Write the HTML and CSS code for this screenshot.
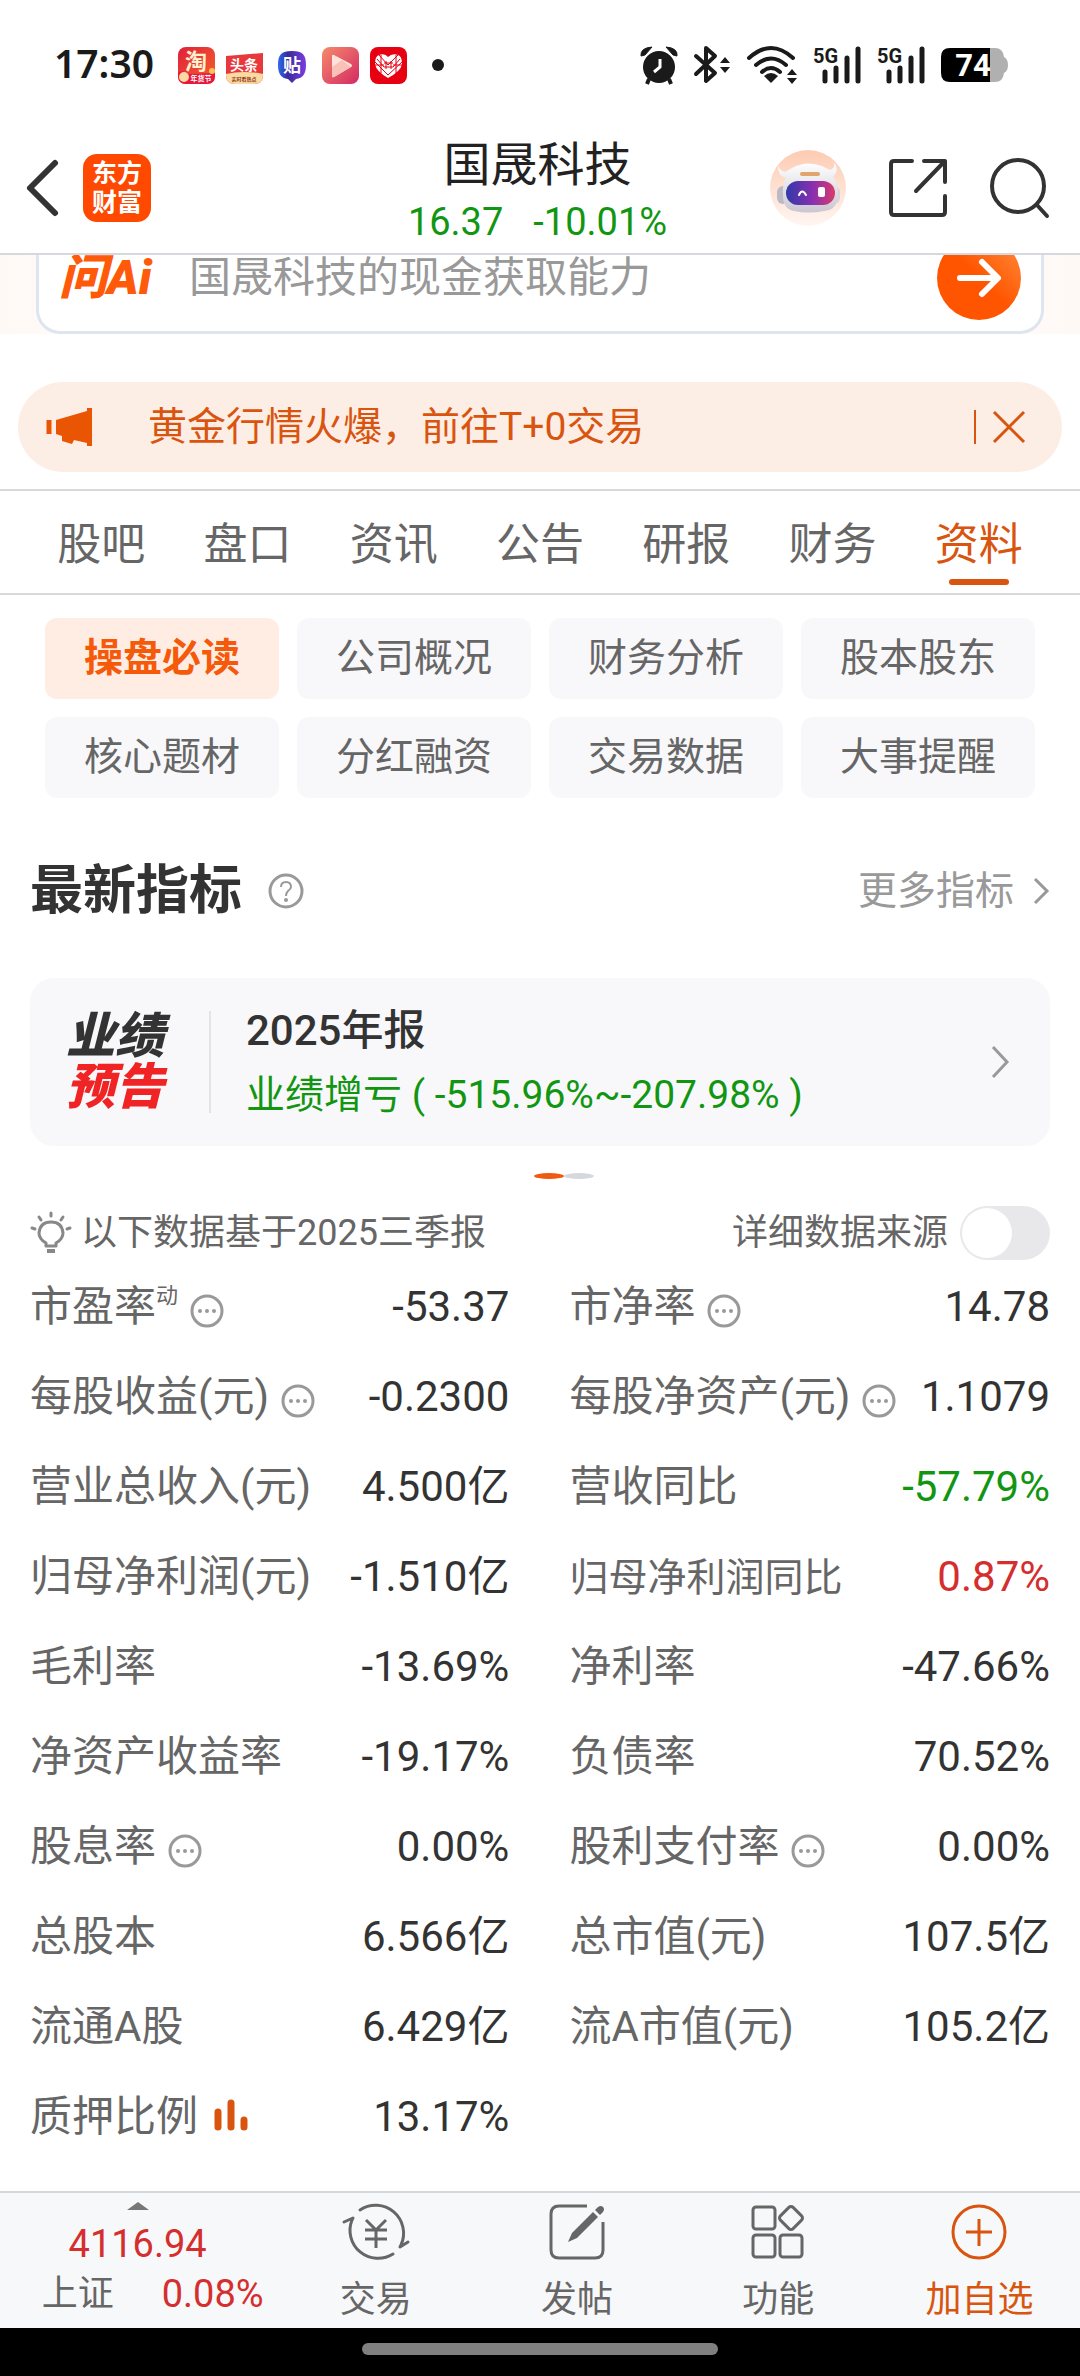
FILE: index.html
```html
<!DOCTYPE html>
<html lang="zh-CN">
<head>
<meta charset="UTF-8">
<meta name="viewport" content="width=device-width, initial-scale=1.0">
<title>国晟科技 - 资料</title>
<link rel="stylesheet" href="styles.css">
</head>
<body>

<!-- STATUS BAR -->
<div class="status">
  <span class="clock">17:30</span>
  <div class="apps">
    <svg width="37" height="37" viewBox="0 0 37 37">
      <defs><linearGradient id="tao" x1="0" y1="0" x2="1" y2="1"><stop offset="0" stop-color="#e01f3a"/><stop offset="1" stop-color="#f5642c"/></linearGradient></defs>
      <rect width="37" height="37" rx="8" fill="url(#tao)"/>
      <path d="M0 26C4 22 8 26 11 27L37 26V29Q37 37 29 37H8Q0 37 0 29Z" fill="#e8173c"/>
      <circle cx="6" cy="30" r="5" fill="#fbd9a0"/><circle cx="34" cy="24" r="3" fill="#f9c05a"/>
      <text x="18" y="22" class="i-text" font-size="22" fill="#fff0cf">淘</text>
      <text x="23" y="34" class="i-text" font-size="7" fill="#fff">年货节</text>
    </svg>
    <svg width="37" height="37" viewBox="0 0 37 37">
      <path d="M0 9L37 6V28Q37 37 28 37H9Q0 37 0 28Z" fill="#e9383c"/>
      <path d="M0 27Q18 23 37 27V28Q37 37 28 37H9Q0 37 0 28Z" fill="#fbd9a0"/>
      <text x="18" y="23" class="i-text" font-size="14" fill="#fff">头条</text>
      <text x="18" y="34" class="i-text" font-size="5" fill="#8a3a1c">实时看热点</text>
    </svg>
    <svg width="37" height="37" viewBox="0 0 37 37">
      <defs><linearGradient id="tie" x1="0" y1="0" x2="1" y2="0"><stop offset="0" stop-color="#2a6cf0"/><stop offset=".35" stop-color="#3a2a9c"/><stop offset="1" stop-color="#7a3fe0"/></linearGradient></defs>
      <path d="M18 4C29 4 32 8 32 18C32 27 29 31 22 32L18 36L14 32C7 31 4 27 4 18C4 8 7 4 18 4Z" fill="url(#tie)"/>
      <text x="18" y="25" class="i-text" font-size="18" fill="#fff">贴</text>
    </svg>
    <svg width="37" height="37" viewBox="0 0 37 37">
      <defs><linearGradient id="play" x1="0" y1="0" x2="1" y2="1"><stop offset="0" stop-color="#f58a6c"/><stop offset="1" stop-color="#d42a63"/></linearGradient></defs>
      <rect width="37" height="37" rx="8" fill="url(#play)"/>
      <path d="M10 9Q10 7 12 8L29 17Q31 19 29 20L12 30Q10 31 10 29Z" fill="#fde3dc"/>
      <path d="M10 20L20 13L29 20L12 30Q10 31 10 29Z" fill="#f9c1b8"/>
    </svg>
    <svg width="37" height="37" viewBox="0 0 37 37">
      <rect width="37" height="37" rx="8" fill="#e60012"/>
      <path d="M18 10Q22 6 28 8Q32 9 32 17Q31 24 18 31Q6 24 5 17Q5 9 9 8Q15 6 18 10Z" fill="#fff"/>
      <path d="M9 8L18 18L28 8M5 15L18 28L32 15M11 8V26M26 8V26M5 18H14M23 18H32M16 14V22M21 14V22M14 16H23M14 20H23M7 12L14 20M30 12L23 20" stroke="#e60012" stroke-width="1" fill="none"/>
    </svg>
    <svg width="37" height="37" viewBox="0 0 37 37"><circle cx="20" cy="18" r="6" fill="#1a1a1a"/></svg>
  </div>
  <div class="signals">
    <svg width="38" height="40" viewBox="0 0 38 40">
      <circle cx="19" cy="22" r="16" fill="#1a1a1a"/>
      <path d="M1 11Q0 3 12 2L5 10ZM37 11Q38 3 26 2L33 10Z" fill="#1a1a1a" stroke="#1a1a1a" stroke-linejoin="round"/>
      <path d="M9 34L7 39M29 34L31 39" stroke="#1a1a1a" stroke-width="4"/>
      <path d="M20 14V22L14 27" stroke="#fff" stroke-width="3" fill="none"/>
    </svg>
    <svg width="38" height="40" viewBox="0 0 38 40">
      <path d="M3 11L22 28L13 36V3L22 11L3 29" stroke="#1a1a1a" stroke-width="4" fill="none" stroke-linejoin="round" stroke-linecap="round"/>
      <path d="M27 18L32 12L37 18ZM27 22H37L32 28Z" fill="#1a1a1a"/>
    </svg>
    <svg width="52" height="40" viewBox="0 0 52 40">
      <path d="M3 13Q25 -7 47 13M10 20Q25 7 40 20M16 27Q25 19 34 27" stroke="#1a1a1a" stroke-width="4" fill="none" stroke-linecap="round"/>
      <path d="M18 31Q25 25 32 31L25 38Z" fill="#1a1a1a"/>
      <path d="M41 30L46 24L51 30ZM41 33H51L46 39Z" fill="#1a1a1a"/>
    </svg>
    <svg width="49" height="40" viewBox="0 0 49 40">
      <text x="0" y="18" font-size="20" font-weight="700" fill="#1a1a1a">5G</text>
      <path d="M12 27V36M23 23V36M34 13V36M45 4V36" stroke="#1a1a1a" stroke-width="5" stroke-linecap="round"/>
    </svg>
    <svg width="49" height="40" viewBox="0 0 49 40">
      <text x="0" y="18" font-size="20" font-weight="700" fill="#1a1a1a">5G</text>
      <path d="M12 27V36M23 23V36M34 13V36M45 4V36" stroke="#1a1a1a" stroke-width="5" stroke-linecap="round"/>
    </svg>
    <svg width="67" height="40" viewBox="0 0 67 40">
      <path d="M49 3H54Q62 3 63 12Q67 14 67 20Q67 26 63 28Q62 37 54 37H49Z" fill="#b0b0b0"/>
      <path d="M9 3H49V37H9Q0 37 0 28V12Q0 3 9 3Z" fill="#000"/>
      <text x="32" y="31" font-size="31" font-weight="700" fill="#fff" text-anchor="middle">74</text>
    </svg>
  </div>
</div>

<!-- HEADER -->
<header class="header">
  <div class="side">
    <button class="icon-btn" aria-label="返回">
      <svg width="34" height="58" viewBox="0 0 34 58"><path d="M30 4L5 29L30 54" stroke="#333" stroke-width="6" fill="none" stroke-linecap="round" stroke-linejoin="round"/></svg>
    </button>
    <a class="logo" href="#"><span>东方</span><span>财富</span></a>
  </div>
  <div class="stock">
    <h1>国晟科技</h1>
    <p class="green"><span>16.37</span><span>-10.01%</span></p>
  </div>
  <div class="side right">
    <button class="icon-btn" aria-label="智能助手">
      <svg width="76" height="76" viewBox="0 0 76 76">
        <defs>
          <linearGradient id="bot" x1="0" y1="0" x2="0" y2="1"><stop offset="0" stop-color="#fdcbb2"/><stop offset="1" stop-color="#fff6f2"/></linearGradient>
          <linearGradient id="visor" x1="0" y1="0" x2="1" y2="0"><stop offset="0" stop-color="#2f3aa8"/><stop offset=".55" stop-color="#8a2fb0"/><stop offset="1" stop-color="#d93a6a"/></linearGradient>
          <linearGradient id="head" x1="0" y1="0" x2="0" y2="1"><stop offset="0" stop-color="#fff"/><stop offset="1" stop-color="#c9c6d0"/></linearGradient>
        </defs>
        <circle cx="38" cy="38" r="38" fill="url(#bot)"/>
        <rect x="7" y="36" width="12" height="18" rx="6" fill="#bdb9c4"/><rect x="58" y="36" width="12" height="18" rx="6" fill="#d8d4dc"/>
        <path d="M8 14Q8 20 15 22L22 18Q36 10 52 16L60 20Q66 17 64 12Q70 20 63 27Q69 34 68 46Q67 60 54 61Q38 64 24 61Q13 59 13 46Q12 36 16 28Q7 26 8 14Z" fill="url(#head)"/>
        <rect x="30" y="22" width="20" height="4" rx="2" fill="#e3a36c"/>
        <rect x="16" y="31" width="49" height="24" rx="12" fill="url(#visor)"/>
        <path d="M29 45Q32 38 36 45" stroke="#fff" stroke-width="2" fill="none" stroke-linecap="round"/>
        <rect x="48" y="37" width="7" height="10" rx="2" fill="#fff"/>
      </svg>
    </button>
    <button class="icon-btn" aria-label="分享">
      <svg width="60" height="60" viewBox="0 0 60 60"><path d="M24 3H6Q3 3 3 6V54Q3 57 6 57H54Q57 57 57 54V38M36 3H57V24M56 4L28 33" stroke="#333" stroke-width="4" fill="none" stroke-linecap="round" stroke-linejoin="round"/></svg>
    </button>
    <button class="icon-btn" aria-label="搜索">
      <svg width="60" height="60" viewBox="0 0 60 60"><circle cx="28" cy="28" r="26" stroke="#333" stroke-width="4" fill="none"/><path d="M47 47L57 58" stroke="#333" stroke-width="4" stroke-linecap="round"/></svg>
    </button>
  </div>
</header>

<main class="main">

  <!-- AI SEARCH -->
  <div class="ask-strip">
    <form class="ask">
      <label class="ask-logo" for="q">问Ai</label>
      <input id="q" type="text" placeholder="国晟科技的现金获取能力">
      <button class="go" type="button" aria-label="提问">
        <svg width="84" height="84" viewBox="0 0 84 84"><path d="M23 42H60M45 26L61 42L45 58" stroke="#fff" stroke-width="6" fill="none" stroke-linecap="round" stroke-linejoin="round"/></svg>
      </button>
    </form>
  </div>

  <!-- NOTICE -->
  <div class="notice">
    <svg width="48" height="42" viewBox="0 0 48 42"><path d="M10 14L41 5V2H46V40H41V37L28 34L26 38L16 35V30L10 28Z" fill="#ea5504"/><path d="M3 14V28" stroke="#ea5504" stroke-width="5"/></svg>
    <a href="#">黄金行情火爆，前往T+0交易</a>
    <button class="close" aria-label="关闭">
      <svg width="34" height="34" viewBox="0 0 34 34"><path d="M2 2L32 32M32 2L2 32" stroke="#d9550f" stroke-width="3"/></svg>
    </button>
  </div>

  <nav class="tabs">
    <a href="#">股吧</a><a href="#">盘口</a><a href="#">资讯</a><a href="#">公告</a><a href="#">研报</a><a href="#">财务</a><a href="#" class="active">资料</a>
  </nav>

  <div class="chips">
    <button class="active">操盘必读</button>
    <button>公司概况</button>
    <button>财务分析</button>
    <button>股本股东</button>
    <button>核心题材</button>
    <button>分红融资</button>
    <button>交易数据</button>
    <button>大事提醒</button>
  </div>

  <!-- LATEST INDICATORS -->
  <div class="section-head">
    <h2>最新指标</h2>
    <button class="icon-btn" aria-label="说明">
      <svg width="36" height="36" viewBox="0 0 36 36"><circle cx="18" cy="18" r="16" stroke="#999" stroke-width="3" fill="none"/><path d="M13 14Q13 9 18 9Q23 9 23 14Q23 16 20 18Q18 20 18 23" stroke="#999" stroke-width="2" fill="none"/><circle cx="18" cy="27" r="2" fill="#999"/></svg>
    </button>
    <a class="more" href="#">更多指标
      <svg width="18" height="28" viewBox="0 0 18 28"><path d="M3 2L15 14L3 26" stroke="#999" stroke-width="3" fill="none"/></svg>
    </a>
  </div>

  <a class="report" href="#">
    <span class="badge"><span>业绩</span><span class="red">预告</span></span>
    <span class="report-text">
      <strong>2025年报</strong>
      <span class="green">业绩增亏 ( -515.96%~-207.98% )</span>
    </span>
    <svg width="20" height="34" viewBox="0 0 20 34"><path d="M3 2L17 17L3 32" stroke="#999" stroke-width="3" fill="none"/></svg>
  </a>

  <div class="pager"><span class="on"></span><span></span></div>

  <div class="source">
    <svg width="42" height="42" viewBox="0 0 42 42"><path d="M16 34V31Q9 27 9 21Q10 10 21 10Q32 10 33 21Q33 27 26 31V34Z" stroke="#888" stroke-width="3" fill="none" stroke-linejoin="round"/><path d="M17 39H25" stroke="#888" stroke-width="4"/><path d="M21 1V4M9 5L11 8M33 5L31 8M2 16L5 17M40 16L37 17" stroke="#888" stroke-width="3" stroke-linecap="round"/></svg>
    <span>以下数据基于2025三季报</span>
    <label for="detail">详细数据来源</label>
    <input id="detail" class="switch" type="checkbox">
  </div>

  <table class="data">
    <tbody id="rows"></tbody>
  </table>
</main>

<!-- BOTTOM BAR -->
<footer class="bottom">
  <a class="index" href="#">
    <svg width="22" height="8" viewBox="0 0 22 8"><path d="M0 8L11 0L22 8Z" fill="#777"/></svg>
    <span class="red">4116.94</span>
    <span class="index-row"><span>上证</span><span class="red">0.08%</span></span>
  </a>
  <button>
    <svg width="66" height="60" viewBox="0 0 66 60"><path d="M17 8A28 28 0 0 1 58 43L57 45L65 40M50 52A28 28 0 0 1 9 18L10 16L1 20" stroke="#666" stroke-width="3" fill="none" stroke-linecap="round" stroke-linejoin="round"/><path d="M23 18L33 28L43 18M22 28H44M22 37H44M33 28V46" stroke="#666" stroke-width="3" fill="none"/></svg>
    交易
  </button>
  <button>
    <svg width="60" height="60" viewBox="0 0 60 60"><path d="M40 4H12Q4 4 4 12V48Q4 56 12 56H48Q56 56 56 48V20" stroke="#666" stroke-width="3" fill="none"/><path d="M21 40L25 31L46 10L51 15L30 36Z" fill="#666"/><path d="M48 8L51 5Q54 3 56 5Q58 7 56 10L53 13Z" fill="#666"/></svg>
    发帖
  </button>
  <button>
    <svg width="60" height="60" viewBox="0 0 60 60"><g stroke="#666" stroke-width="3" fill="none"><rect x="5" y="5" width="22" height="22" rx="3"/><rect x="5" y="33" width="22" height="22" rx="3"/><rect x="32" y="33" width="22" height="22" rx="3"/><rect x="34" y="7" width="18" height="18" rx="3" transform="rotate(45 43 16)"/></g></svg>
    功能
  </button>
  <button class="add">
    <svg width="60" height="60" viewBox="0 0 60 60"><circle cx="30" cy="30" r="26" stroke="#d9550f" stroke-width="3" fill="none"/><path d="M30 17V44M17 30H43" stroke="#d9550f" stroke-width="3"/></svg>
    加自选
  </button>
</footer>
<div class="home"><span></span></div>

<script>
const tip = '<button class="tip" aria-label="说明"><svg width="34" height="34" viewBox="0 0 34 34"><circle cx="17" cy="17" r="15" stroke="#999" stroke-width="3" fill="none"/><circle cx="10" cy="17" r="2" fill="#999"/><circle cx="17" cy="17" r="2" fill="#999"/><circle cx="24" cy="17" r="2" fill="#999"/></svg></button>';
const bars = '<svg class="bars" width="34" height="32" viewBox="0 0 34 32"><path d="M4 13V28M17 4V28M30 21V28" stroke="#d9550f" stroke-width="7" stroke-linecap="round"/></svg>';

const rows = [
 ["市盈率<sup>动</sup>"+tip, "-53.37", "市净率"+tip, "14.78"],
 ["每股收益(元)"+tip, "-0.2300", "每股净资产(元)"+tip, "1.1079"],
 ["营业总收入(元)", "4.500亿", "营收同比", "-57.79%", "green"],
 ["归母净利润(元)", "-1.510亿", "<small>归母净利润同比</small>", "0.87%", "red"],
 ["毛利率", "-13.69%", "净利率", "-47.66%"],
 ["净资产收益率", "-19.17%", "负债率", "70.52%"],
 ["股息率"+tip, "0.00%", "股利支付率"+tip, "0.00%"],
 ["总股本", "6.566亿", "总市值(元)", "107.5亿"],
 ["流通A股", "6.429亿", "流A市值(元)", "105.2亿"],
 ["质押比例"+bars, "13.17%", "", ""]
];

let html = "";
rows.forEach(r => {
 html += "<tr><th>"+r[0]+"</th><td>"+r[1]+"</td>";
 html += r[2] ? "<th>"+r[2]+"</th><td class='"+(r[4]||"")+"'>"+r[3]+"</td></tr>" : "<td></td><td></td></tr>";
});
document.getElementById("rows").innerHTML = html;
</script>

</body>
</html>
```
FILE: styles.css
```css
*{
 box-sizing:border-box;
}

body{
 margin:0;
 min-height:100vh;
 display:flex;
 flex-direction:column;
 background:#fff;
 color:#333;
 font-family:Roboto,"Noto Sans CJK SC",sans-serif;
 font-size:39px;
 line-height:1.3;
}

a{
 color:inherit;
 text-decoration:none;
}

button{
 padding:0;
 border:none;
 background:none;
 color:inherit;
 font:inherit;
 cursor:pointer;
}

svg{
 display:block;
 flex:none;
 overflow:visible;
}

h1,h2,p{
 margin:0;
}

.green{color:#129612;}
.red{color:#d52e2e;}

/* STATUS BAR */
.status{
 display:flex;
 align-items:center;
 height:130px;
 padding:0 72px 0 54px;
}

.clock{
 color:#1a1a1a;
 font-family:"Noto Sans",sans-serif;
 font-size:39px;
 font-weight:600;
 line-height:40px;
 padding-bottom:4px;
}

.apps{
 display:flex;
 gap:11px;
 margin-left:24px;
}

.i-text{
 font-family:"Noto Sans CJK SC",sans-serif;
 font-weight:700;
 text-anchor:middle;
}

.signals{
 display:flex;
 gap:15px;
 margin-left:auto;
}

/* HEADER */
.header{
 display:flex;
 align-items:center;
 height:125px;
 padding:0 30px 8px 25px;
 border-bottom:2px solid #d5d8dc;
}

.side{
 flex:1;
 display:flex;
 align-items:center;
 gap:24px;
}

.right{
 justify-content:flex-end;
 gap:42px;
}

.logo{
 display:flex;
 flex-direction:column;
 align-items:center;
 justify-content:center;
 width:68px;
 height:68px;
 border-radius:14px;
 background:#ff4800;
 color:#fff;
 font-size:25px;
 font-weight:700;
 line-height:29px;
}

.stock{
 padding-top:6px;
 text-align:center;
}

.stock h1{
 color:#222;
 font-size:47px;
 font-weight:400;
 line-height:62px;
}

.stock p{
 display:flex;
 justify-content:center;
 gap:30px;
 font-size:38px;
 line-height:52px;
}

/* AI SEARCH */
.ask-strip{
 display:flex;
 align-items:flex-end;
 height:79px;
 padding:0 36px;
 overflow:hidden;
 background:linear-gradient(90deg,#fff9f6,#fff 50%,#fff9f6);
}

.ask{
 flex:1;
 display:flex;
 align-items:center;
 height:112px;
 padding:0 20px;
 border:3px solid #dde5ef;
 border-radius:24px;
 background:#fff;
}

.ask-logo{
 width:130px;
 color:#ff5a0a;
 font-size:48px;
 font-style:italic;
 font-weight:900;
}

.ask input{
 flex:1;
 min-width:0;
 padding:0;
 border:none;
 outline:none;
 background:none;
 color:#333;
 font:inherit;
 font-size:42px;
}

.ask input::placeholder{
 color:#999;
}

.go{
 border-radius:50%;
 background:linear-gradient(45deg,#ff5500 50%,#ff9040);
}

/* NOTICE */
.notice{
 display:flex;
 align-items:center;
 height:90px;
 margin:48px 18px 17px;
 padding:0 36px 0 28px;
 border-radius:45px;
 background:#fdeee5;
 color:#d9550f;
}

.notice a{
 flex:1;
 margin-left:54px;
}

.close{
 padding-left:16px;
 border-left:2px solid #d9550f;
}

/* TABS */
.tabs{
 display:flex;
 padding:0 28px;
 border-top:2px solid #d8d8d8;
 border-bottom:2px solid #d8d8d8;
}

.tabs a{
 flex:1;
 display:flex;
 flex-direction:column;
 align-items:center;
 height:102px;
 padding-top:21px;
 color:#666;
 font-size:44px;
 line-height:67px;
}

.tabs a::after{
 content:"";
 width:60px;
 height:6px;
 border-radius:3px;
}

.tabs .active{
 color:#d9550f;
}

.tabs .active::after{
 background:#d9550f;
}

.chips{
 display:grid;
 grid-template-columns:repeat(4,1fr);
 gap:18px;
 padding:23px 45px 0;
}

.chips button{
 height:81px;
 border-radius:12px;
 background:#f8f8fa;
 color:#666;
}

.chips .active{
 background:#ffede4;
 color:#f55a0a;
 font-weight:700;
}

/* LATEST INDICATORS */
.section-head{
 display:flex;
 align-items:center;
 height:180px;
 padding:6px 30px 0;
}

.section-head h2{
 margin-right:26px;
 font-size:53px;
 font-weight:700;
}

.more{
 display:flex;
 align-items:center;
 gap:18px;
 margin-left:auto;
 color:#999;
}

.report{
 display:flex;
 align-items:center;
 height:168px;
 margin:0 30px;
 padding:0 40px 0 36px;
 border-radius:24px;
 background:#f8f8fa;
}

.badge{
 display:flex;
 flex-direction:column;
 width:145px;
 border-right:2px solid #e3e3e6;
 font-size:49px;
 font-style:italic;
 font-weight:900;
 line-height:51px;
}

.badge .red{
 color:#f02424;
}

.report-text{
 flex:1;
 display:flex;
 flex-direction:column;
 margin-left:35px;
 padding-top:2px;
 line-height:64px;
}

.report-text strong{
 font-size:42px;
 font-weight:500;
}

.pager{
 display:flex;
 justify-content:center;
 margin:27px 0;
 padding-left:48px;
}

.pager span{
 width:30px;
 height:6px;
 border-radius:50%;
 background:#d5d9de;
}

.pager .on{
 background:#f05a10;
}

.source{
 display:flex;
 align-items:center;
 height:54px;
 padding:0 30px;
 color:#666;
 font-size:36px;
}

.source span{
 margin-left:9px;
}

.source label{
 margin:0 12px 0 auto;
}

.switch{
 appearance:none;
 display:flex;
 align-items:center;
 width:90px;
 height:54px;
 margin:0;
 padding:0 2px;
 border-radius:27px;
 background:#e8e8eb;
}

.switch::before{
 content:"";
 width:50px;
 height:50px;
 border-radius:50%;
 background:#fff;
}

.switch:checked{
 justify-content:flex-end;
 background:#f05a10;
}

/* DATA */
.data{
 width:calc(100% - 60px);
 margin:2px 30px 0;
 border-collapse:collapse;
 table-layout:fixed;
 font-size:42px;
}

.data tr{
 height:90px;
}

.data th,
.data td{
 padding:0;
 white-space:nowrap;
}

.data th{
 width:29%;
 color:#666;
 font-weight:400;
 text-align:left;
}

.data td{
 width:18%;
 text-align:right;
}

.data th:nth-child(3){
 width:38%;
 padding-left:60px;
}

.data td:nth-child(4){
 width:15%;
}

.data small{
 font-size:39px;
}

.data sup{
 font-size:22px;
 line-height:1;
 vertical-align:18px;
}

.tip,
.bars{
 display:inline-block;
 margin-left:12px;
}

.tip{
 vertical-align:-7px;
}

.tip svg{
 display:block;
}

.bars{
 margin-left:16px;
}

/* BOTTOM BAR */
.main{
 flex:1;
}

.bottom{
 display:flex;
 height:137px;
 border-top:2px solid #d3d8de;
 background:#f7f8fa;
 color:#666;
 font-size:36px;
}

.bottom button{
 flex:201;
 display:flex;
 flex-direction:column;
 align-items:center;
 padding-top:9px;
 line-height:76px;
}

.index{
 flex:275;
 display:flex;
 flex-direction:column;
 align-items:center;
 padding-top:9px;
 font-size:38px;
 line-height:50px;
}

.index > .red{
 margin-top:9px;
}

.index-row{
 display:flex;
 gap:48px;
 padding-left:30px;
}

.index-row span:first-child{
 font-size:36px;
}

.bottom .add{
 color:#d9550f;
}

.home{
 display:flex;
 justify-content:center;
 height:48px;
 padding-top:15px;
 background:#000;
}

.home span{
 width:33%;
 height:12px;
 border-radius:6px;
 background:#808080;
}
```
